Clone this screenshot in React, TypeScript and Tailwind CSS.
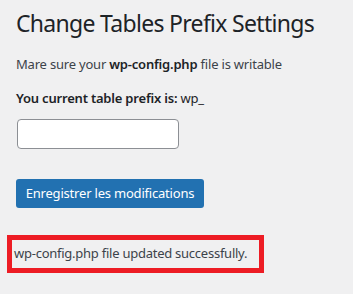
import React from 'react';

export default function App() {
  return (
    <div className="h-[294px] w-[353px] overflow-hidden bg-[#f0f0f1] font-['Noto_Sans',sans-serif] text-[#3c434a]">
      <div className="pl-4 pt-[8px]">
        <h1 className="text-[23px] leading-[30px] font-normal tracking-[-0.7px] text-[#1d2327]">
          Change Tables Prefix Settings
        </h1>

        <p className="mt-[16px] text-[13px] leading-[20px] tracking-[-0.2px]">
          Mare sure your <strong className="font-semibold text-[#1d2327]">wp-config.php</strong> file is writable
        </p>

        <p className="mt-[14px] text-[13px] leading-[20px] tracking-[-0.2px] text-[#1d2327]">
          <span className="font-semibold">You current table prefix is:</span> wp_
        </p>

        <div className="mt-[11px] pl-px">
          <input
            type="text"
            className="h-[30px] w-[162px] rounded-[4px] border border-[#8c8f94] bg-white px-2 text-[14px]"
          />
        </div>

        <button className="mt-[30px] h-[29px] w-[188px] rounded-[3px] bg-[#2271b1] text-[13px] tracking-[-0.2px] text-white">
          Enregistrer les modifications
        </button>
      </div>

      <div className="ml-[7px] mt-[27px] flex h-[38px] w-[257px] items-center border-[5px] border-[#ed1c24] pl-[2px] text-[13px] tracking-[-0.25px]">
        wp-config.php file updated successfully.
      </div>
    </div>
  );
}
